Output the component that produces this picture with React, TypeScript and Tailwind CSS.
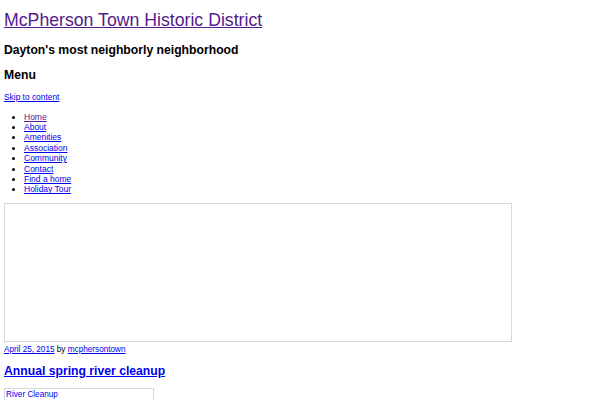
export default function App() {
  const items = ["Home", "About", "Amenities", "Association", "Community", "Contact", "Find a home", "Holiday Tour"];
  return (
    <div className="w-[600px] h-[400px] overflow-hidden bg-white px-[4px] pt-[9px] text-black" style={{ fontFamily: '"Liberation Sans", Arial, sans-serif' }}>
      <div className="text-[17.7px] leading-[22px]">
        <a href="#" className="text-[#551a8b] underline">McPherson Town Historic District</a>
      </div>
      <div className="mt-[11px] text-[12.2px] leading-[16px] font-bold">Dayton's most neighborly neighborhood</div>
      <div className="mt-[9px] text-[12.2px] leading-[16px] font-bold">Menu</div>
      <div className="mt-[9px] text-[8.4px] leading-[11px]">
        <a href="#" className="text-[#0000ee] underline">Skip to content</a>
      </div>
      <ul className="mt-[8.5px] list-disc pl-[20px] text-[8.5px] leading-[10.4px]">
        {items.map((t, i) => (
          <li key={t}>
            <a href="#" className={i === 0 ? "text-[#551a8b] underline" : "text-[#0000ee] underline"}>{t}</a>
          </li>
        ))}
      </ul>
      <div className="mt-[8px] w-[508px] h-[139px] border border-[#d8d8d8]"></div>
      <div className="mt-[2px] text-[8.2px] leading-[11px]">
        <a href="#" className="text-[#0000ee] underline">April 25, 2015</a> by <a href="#" className="text-[#0000ee] underline">mcphersontown</a>
      </div>
      <div className="mt-[8px] text-[12.2px] leading-[16px] font-bold">
        <a href="#" className="text-[#0000ee] underline">Annual spring river cleanup</a>
      </div>
      <div className="mt-[9px] w-[150px] h-[20px] border border-[#d8d8d8] px-[1px] text-[8.2px] leading-[11px] text-[#0000ee]">River Cleanup</div>
    </div>
  );
}
